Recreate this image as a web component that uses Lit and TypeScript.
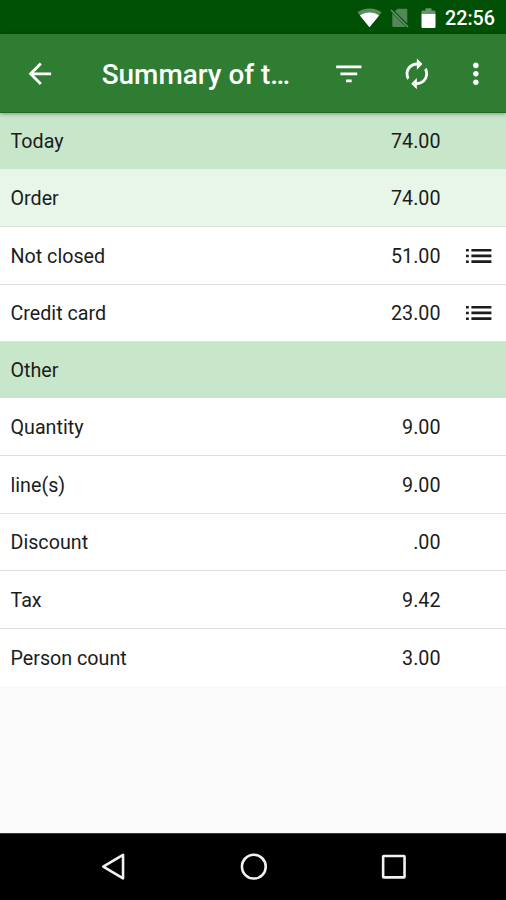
import { LitElement, html, css, svg, nothing } from "lit";
import { customElement } from "lit/decorators.js";
import { classMap } from "lit/directives/class-map.js";

interface Row {
  label: string;
  value?: string;
  kind?: "header" | "sub";
  details?: boolean;
  short?: boolean;
}

const ROWS: Row[] = [
  { label: "Today", value: "74.00", kind: "header" },
  { label: "Order", value: "74.00", kind: "sub" },
  { label: "Not closed", value: "51.00", details: true },
  { label: "Credit card", value: "23.00", details: true, short: true },
  { label: "Other", kind: "header" },
  { label: "Quantity", value: "9.00" },
  { label: "line(s)", value: "9.00" },
  { label: "Discount", value: ".00", short: true },
  { label: "Tax", value: "9.42" },
  { label: "Person count", value: "3.00", short: true },
];

const icon = (path: string) => html`
  <svg class="icon" viewBox="0 0 24 24" fill="currentColor">${svg`<path d=${path}></path>`}</svg>
`;

const BACK = "M20 11H7.83l5.59-5.59L12 4l-8 8 8 8 1.41-1.41L7.83 13H20v-2z";
const FILTER = "M10 18h4v-2h-4v2zM3 6v2h18V6H3zm3 7h12v-2H6v2z";
const RENEW =
  "M12 6v3l4-4-4-4v3c-4.42 0-8 3.58-8 8 0 1.57.46 3.03 1.24 4.26L6.7 14.8c-.45-.83-.7-1.79-.7-2.8 0-3.31 2.69-6 6-6zm6.76 1.74L17.3 9.2c.44.84.7 1.79.7 2.8 0 3.31-2.69 6-6 6v-3l-4 4 4 4v-3c4.42 0 8-3.58 8-8 0-1.57-.46-3.03-1.24-4.26z";
const MORE =
  "M12 8c1.1 0 2-.9 2-2s-.9-2-2-2-2 .9-2 2 .9 2 2 2zm0 2c-1.1 0-2 .9-2 2s.9 2 2 2 2-.9 2-2-.9-2-2-2zm0 6c-1.1 0-2 .9-2 2s.9 2 2 2 2-.9 2-2-.9-2-2-2z";

@customElement("status-bar")
export class StatusBar extends LitElement {
  static styles = css`
    :host {
      display: flex;
      justify-content: flex-end;
      align-items: center;
      height: 34px;
      box-sizing: border-box;
      padding: 2px 11px 0 0;
      background: #005005;
      color: #fff;
      font: 500 19.7px/32px Roboto, sans-serif;
    }
    span {
      padding-top: 2px;
      line-height: 30px;
    }
    svg {
      display: block;
    }
    .wifi {
      margin-right: 8px;
    }
    .sim {
      margin-right: 12px;
    }
    .battery {
      margin-right: 9px;
    }
  `;

  render() {
    return html`
      <svg class="wifi" width="25" height="20" viewBox="0 0 25 20">
        <path d="M12.5 19.3.4 4.2C3.6 1.8 7.8.4 12.5.4s8.9 1.4 12.1 3.8z" fill="#fff" opacity=".35"></path>
        <path d="M12.5 19.3 2.9 7.4C5.600 5.500 8.900 4.400 12.500 4.400s6.900 1.100 9.600 3z" fill="#fff"></path>
      </svg>
      <svg class="sim" width="19" height="20" viewBox="0 0 19 20">
        <path d="M7.5.8h8.500q1.300 0 1.300 1.300v13.400L4.800 3.300zM2.300 5.200 15.700 18.600q-.3.400-1 .4H3.600q-1.300 0-1.300-1.300z" fill="#fff" opacity=".32"></path>
        <path d="M1 2 18 19" stroke="#fff" stroke-width="1.600" opacity=".4"></path>
      </svg>
      <svg class="battery" width="15" height="21" viewBox="0 0 15 21">
        <path d="M4.500.3h6v2.200h2.700q1.300 0 1.300 1.300V6H.5V3.800q0-1.300 1.300-1.300h2.700z" fill="#fff" opacity=".4"></path>
        <path d="M.5 6h14v12.700q0 1.300-1.300 1.300H1.800Q.5 20 .5 18.700z" fill="#fff"></path>
      </svg>
      <span>22:56</span>
    `;
  }
}

@customElement("app-toolbar")
export class AppToolbar extends LitElement {
  static styles = css`
    :host {
      display: flex;
      align-items: center;
      height: 79px;
      box-sizing: border-box;
      padding: 1px 13px 0 23px;
      background: #2e7d32;
      border-bottom: 1px solid #1f6b26;
      box-shadow: 0 1px 4px rgba(0, 0, 0, 0.35);
      position: relative;
      z-index: 1;
      color: #fff;
    }
    .icon {
      display: block;
      width: 33.7px;
      height: 33.7px;
      flex: none;
    }
    .title {
      flex: 1;
      margin: 3px 0 0 45px;
      font: 500 27.9px/36px Roboto, sans-serif;
      white-space: nowrap;
    }
    .actions {
      display: flex;
      gap: 34px;
    }
    .actions .icon:last-child {
      margin-left: -8.5px;
    }
  `;

  render() {
    return html`
      ${icon(BACK)}
      <div class="title">Summary of t…</div>
      <div class="actions">${icon(FILTER)}${icon(RENEW)}${icon(MORE)}</div>
    `;
  }
}

@customElement("summary-list")
export class SummaryList extends LitElement {
  static properties = { rows: { attribute: false } };
  declare rows: Row[];

  static styles = css`
    :host {
      display: block;
      color: #1c1c1c;
      font: 400 19.7px/28px Roboto, sans-serif;
    }
    .row {
      display: grid;
      grid-template-columns: 1fr auto 65.5px;
      align-items: center;
      height: 58px;
      box-sizing: border-box;
      padding-left: 10.5px;
      background: #fff;
      border-bottom: 1px solid #dfdfdf;
    }
    .row span {
      padding-top: 2px;
    }
    .short {
      height: 57px;
    }
    .header {
      height: 56px;
      background: #c8e6c9;
      border-bottom: none;
    }
    .sub {
      background: #e8f5e9;
      border-bottom-color: #e0e3dc;
    }
    .row:last-child {
      border-bottom: none;
    }
    .list {
      display: block;
      margin-left: 25.5px;
    }
  `;

  render() {
    return this.rows.map(
      (r) => html`
        <div class=${classMap({ row: true, header: r.kind === "header", sub: r.kind === "sub", short: !!r.short })}>
          <span>${r.label}</span>
          <span>${r.value ?? nothing}</span>
          ${r.details
            ? html`<svg class="list" width="26" height="16" viewBox="0 0 26 16" fill="#1c1c1c">
                <path d="M0 1h2.800v2.500H0zM0 6.700h2.800v2.500H0zM0 12.400h2.800v2.500H0zM5.400.9h20v2.700h-20zM5.400 6.600h20v2.700h-20zM5.400 12.300h20V15h-20z"></path>
              </svg>`
            : nothing}
        </div>
      `
    );
  }
}

@customElement("nav-bar")
export class NavBar extends LitElement {
  static styles = css`
    :host {
      display: flex;
      justify-content: center;
      align-items: center;
      gap: 107px;
      height: 67px;
      box-sizing: border-box;
      padding-left: 1px;
      background: #000;
      border-top: 1px solid #3a3a3a;
    }
    svg {
      display: block;
      width: 33.7px;
      height: 33.7px;
      fill: none;
      stroke: #f2f2f2;
      stroke-width: 2.6;
    }
  `;

  render() {
    return html`
      <svg viewBox="0 0 34 34"><path d="M27.300 5v23.600L7.300 16.800z" stroke-linejoin="round"></path></svg>
      <svg viewBox="0 0 34 34"><circle cx="17" cy="16.800" r="12"></circle></svg>
      <svg viewBox="0 0 34 34"><rect x="6.200" y="6" width="21.600" height="21.600" rx=".6"></rect></svg>
    `;
  }
}

@customElement("app-root")
export class AppRoot extends LitElement {
  static styles = css`
    :host {
      display: flex;
      flex-direction: column;
      width: 506px;
      height: 900px;
      background: #fafafa;
      overflow: hidden;
    }
    .content {
      flex: 1;
    }
  `;

  render() {
    return html`
      <status-bar></status-bar>
      <app-toolbar></app-toolbar>
      <summary-list class="content" .rows=${ROWS}></summary-list>
      <nav-bar></nav-bar>
    `;
  }
}
